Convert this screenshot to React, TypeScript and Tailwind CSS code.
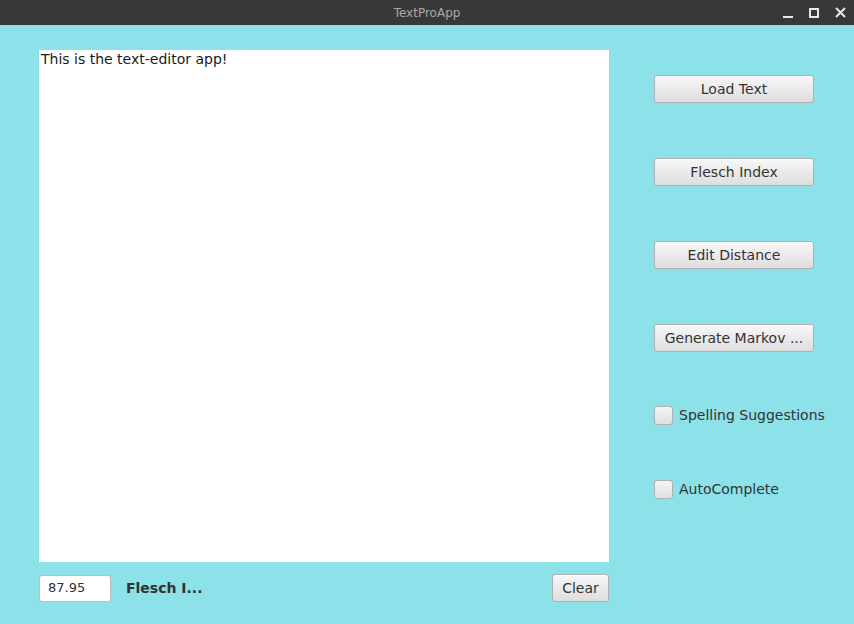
export default function App() {
  const btn =
    "h-[28px] w-[160px] rounded-[3px] border border-[#b0b0b0] bg-gradient-to-b from-[#f7f7f7] to-[#dedede] text-[14px] text-[#333333] shadow-[inset_0_1px_0_#ffffff]";
  const box =
    "h-[19px] w-[19px] rounded-[3px] border border-[#b0b0b0] bg-gradient-to-b from-[#f4f4f4] to-[#e0e0e0]";
  return (
    <div
      className="flex h-[624px] w-[854px] flex-col bg-[#8de2e9]"
      style={{ fontFamily: '"DejaVu Sans", sans-serif' }}
    >
      {/* title bar */}
      <div className="relative flex h-[25px] items-center justify-center bg-[#383838]">
        <span className="text-[12px] text-[#a8a8a8]">TextProApp</span>
        <div className="absolute right-[8px] top-0 flex h-full items-center gap-[16px] text-[#e8e8e8]">
          <svg width="10" height="10" viewBox="0 0 10 10">
            <rect x="0" y="8" width="10" height="2" fill="currentColor" />
          </svg>
          <svg width="10" height="10" viewBox="0 0 10 10">
            <rect x="1" y="1" width="8" height="8" fill="none" stroke="currentColor" strokeWidth="2" />
          </svg>
          <svg width="11" height="11" viewBox="0 0 11 11">
            <path d="M1 1 L10 10 M10 1 L1 10" stroke="currentColor" strokeWidth="2" />
          </svg>
        </div>
      </div>

      <div className="flex flex-1">
        {/* editor column */}
        <div className="ml-[39px] mt-[25px] flex flex-col">
          <div className="h-[512px] w-[570px] bg-white px-[2px] text-[14px] leading-[18px] text-[#1a1a1a]">
            This is the text-editor app!
          </div>
          <div className="mt-[12px] flex items-center">
            <div className="flex h-[27px] w-[72px] items-center rounded-[3px] border border-[#bdbdbd] bg-white pl-[8px] text-[13px] text-[#333333]">
              87.95
            </div>
            <span className="ml-[15px] text-[14px] font-bold text-[#333333]">Flesch I...</span>
            <button className="ml-auto h-[28px] w-[57px] rounded-[3px] border border-[#b0b0b0] bg-gradient-to-b from-[#f7f7f7] to-[#dedede] text-[14px] text-[#333333] shadow-[inset_0_1px_0_#ffffff]">
              Clear
            </button>
          </div>
        </div>

        {/* controls column */}
        <div className="ml-[45px] mt-[50px] flex flex-col">
          <button className={btn}>Load Text</button>
          <button className={`${btn} mt-[55px]`}>Flesch Index</button>
          <button className={`${btn} mt-[55px]`}>Edit Distance</button>
          <button className={`${btn} mt-[55px]`}>Generate Markov ...</button>
          <label className="mt-[53px] flex items-center gap-[6px] text-[14px] text-[#333333]">
            <span className={box} />
            Spelling Suggestions
          </label>
          <label className="mt-[53px] flex items-center gap-[6px] text-[14px] text-[#333333]">
            <span className={box} />
            AutoComplete
          </label>
        </div>
      </div>
    </div>
  );
}
